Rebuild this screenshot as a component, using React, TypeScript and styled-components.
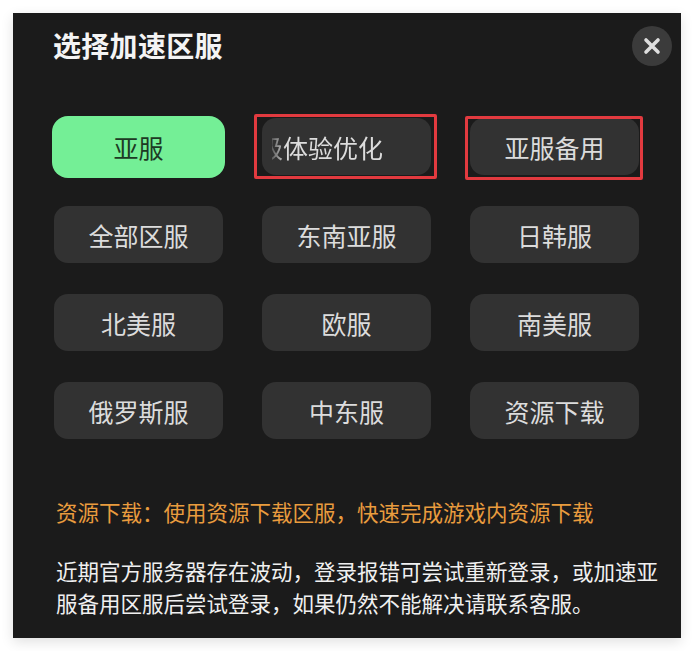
import React from "react";
import styled, { createGlobalStyle, css } from "styled-components";

const Global = createGlobalStyle`
  html, body { margin: 0; padding: 0; background: #ffffff; }
  body { font-family: "Noto Sans CJK SC", "Noto Sans", sans-serif; }
`;

const Page = styled.div`
  padding: 13px 13px 13px 13px;
  width: 694px;
  box-sizing: border-box;
`;

const Panel = styled.div`
  width: 668px;
  height: 625px;
  box-sizing: border-box;
  background: #1b1b1b;
  box-shadow: 0 4px 12px rgba(0, 0, 0, 0.12);
  padding: 13px 9px 16px 41px;
  display: flex;
  flex-direction: column;
`;

const Header = styled.div`
  display: flex;
  align-items: center;
  justify-content: space-between;
  height: 40px;
`;

const Title = styled.h1`
  margin: -2px 0 0 -1px;
  font-size: 28px;
  line-height: 40px;
  font-weight: 700;
  color: #f4f4f4;
  letter-spacing: 0.3px;
`;

const CloseButton = styled.button`
  width: 40px;
  height: 40px;
  border-radius: 50%;
  border: none;
  padding: 0;
  background: #3b3b3b;
  display: flex;
  align-items: center;
  justify-content: center;
  cursor: pointer;
`;

const Grid = styled.div`
  margin-top: 52px;
  display: grid;
  grid-template-columns: repeat(3, 169px);
  grid-auto-rows: 57px;
  column-gap: 39px;
  row-gap: 31px;
`;

const Cell = styled.div`
  position: relative;
  display: flex;
`;

const ServerButton = styled.button<{ $active?: boolean }>`
  flex: 1;
  min-width: 0;
  border: none;
  border-radius: 14px;
  font-family: "Noto Sans CJK SC", "Noto Sans", sans-serif;
  font-size: 25px;
  display: flex;
  align-items: center;
  justify-content: center;
  padding: 0 10px;
  overflow: hidden;
  cursor: pointer;
  ${(p) =>
    p.$active
      ? css`
          background: #74ef96;
          color: #1d3a24;
          margin: -2px -2px -3px -2px;
          border-radius: 16px;
        `
      : css`
          background: #323232;
          color: #dcdcdc;
        `}
`;

const MarqueeClip = styled.span`
  flex: 1;
  overflow: hidden;
  display: block;
  text-align: left;
  -webkit-mask-image: linear-gradient(to right, rgba(0,0,0,0.25) 0px, #000 14px);
  mask-image: linear-gradient(to right, rgba(0,0,0,0.25) 0px, #000 14px);
`;

const MarqueeText = styled.span<{ $shift: number }>`
  display: inline-block;
  white-space: nowrap;
  margin-left: ${(p) => -p.$shift}px;
`;

const Annotation = styled.span<{ $t: number; $r: number; $b: number; $l: number }>`
  position: absolute;
  top: ${(p) => p.$t}px;
  right: ${(p) => p.$r}px;
  bottom: ${(p) => p.$b}px;
  left: ${(p) => p.$l}px;
  border: 3px solid #e23a3f;
  border-radius: 2px;
  pointer-events: none;
`;

const Notes = styled.div`
  margin: 57px 0 0 2px;
  width: 612px;
`;

const Highlight = styled.p`
  margin: 0;
  font-size: 21.5px;
  line-height: 32px;
  color: #e99c3e;
`;

const Body = styled.p`
  margin: 27px 0 0 0;
  font-size: 21.5px;
  line-height: 32px;
  color: #f0f0f0;
`;

type Server = {
  label: string;
  active?: boolean;
  marquee?: { text: string; shift: number };
  box?: { t: number; r: number; b: number; l: number };
};

const servers: Server[] = [
  { label: "亚服", active: true },
  {
    label: "体验优化",
    marquee: { text: "级体验优化", shift: 14 },
    box: { t: -4, r: -6, b: -4, l: -8 },
  },
  { label: "亚服备用", box: { t: -2, r: -4, b: -5, l: -5 } },
  { label: "全部区服" },
  { label: "东南亚服" },
  { label: "日韩服" },
  { label: "北美服" },
  { label: "欧服" },
  { label: "南美服" },
  { label: "俄罗斯服" },
  { label: "中东服" },
  { label: "资源下载" },
];

const CloseIcon = () => (
  <svg width="18" height="18" viewBox="0 0 18 18">
    <path
      d="M3 3 L15 15 M15 3 L3 15"
      stroke="#dedede"
      strokeWidth="3.6"
      strokeLinecap="round"
      fill="none"
    />
  </svg>
);

export default function App() {
  return (
    <Page>
      <Global />
      <Panel>
        <Header>
          <Title>选择加速区服</Title>
          <CloseButton aria-label="关闭">
            <CloseIcon />
          </CloseButton>
        </Header>
        <Grid>
          {servers.map((s) => (
            <Cell key={s.label}>
              <ServerButton $active={s.active}>
                {s.marquee ? (
                  <MarqueeClip>
                    <MarqueeText $shift={s.marquee.shift}>{s.marquee.text}</MarqueeText>
                  </MarqueeClip>
                ) : (
                  s.label
                )}
              </ServerButton>
              {s.box && <Annotation $t={s.box.t} $r={s.box.r} $b={s.box.b} $l={s.box.l} />}
            </Cell>
          ))}
        </Grid>
        <Notes>
          <Highlight>资源下载：使用资源下载区服，快速完成游戏内资源下载</Highlight>
          <Body>
            近期官方服务器存在波动，登录报错可尝试重新登录，或加速亚服备用区服后尝试登录，如果仍然不能解决请联系客服。
          </Body>
        </Notes>
      </Panel>
    </Page>
  );
}
